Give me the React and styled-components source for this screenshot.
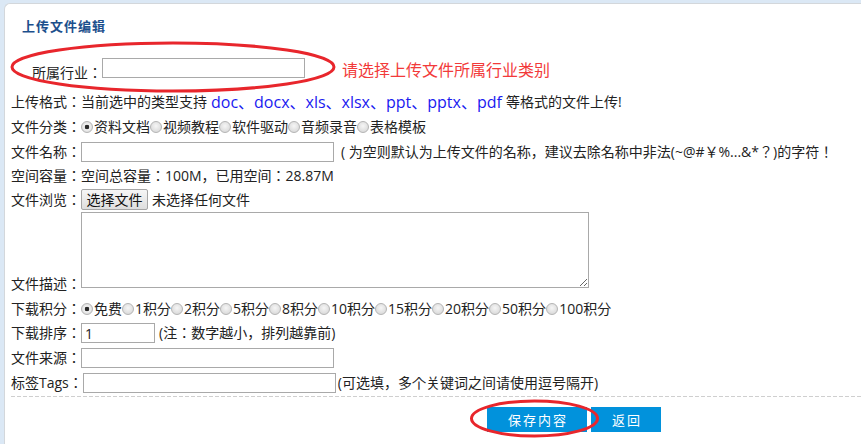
import React from 'react';
import styled, { createGlobalStyle } from 'styled-components';

const FONT = `"Open Sans", "Noto Sans CJK JP", "Noto Sans CJK SC", sans-serif`;

const Global = createGlobalStyle`
  html, body { margin: 0; padding: 0; background: #dbe8f5; }
  body {
    font-family: ${FONT};
    font-size: 14px;
    color: #222;
  }
  #root { height: 444px; overflow: hidden; }
`;

const Page = styled.div`
  position: relative;
  height: 444px;
  padding: 3px 0 0 4px;
  box-sizing: border-box;
`;

const Panel = styled.div`
  background: #fff;
  border-top: 1px solid #d3d7db;
  border-left: 1px solid #d3d7db;
  border-top-left-radius: 6px;
  height: 100%;
  box-sizing: border-box;
  padding-left: 6px;
`;

const Title = styled.h2`
  margin: 14px 0 0 11px;
  font-size: 13px;
  line-height: 17px;
  font-weight: bold;
  letter-spacing: 1px;
  color: #1c4f8c;
`;

const Row = styled.div`
  display: flex;
  align-items: ${p => p.$align || 'center'};
  height: ${p => p.$h || 25}px;
  margin-top: ${p => p.$mt || 0}px;
  padding-left: ${p => p.$indent || 0}px;
  white-space: nowrap;
  line-height: 18px;
`;

const Label = styled.span`
  line-height: ${p => p.$lh || 18}px;
`;

const Text = styled.span`
  color: ${p => p.$color || '#222'};
  font-size: ${p => p.$size || 14}px;
  line-height: 18px;
  margin-left: ${p => p.$ml || 0}px;
  margin-bottom: ${p => p.$mb || 0}px;
`;

const Field = styled.input`
  box-sizing: border-box;
  width: ${p => p.$w}px;
  height: 20px;
  margin: 0 0 ${p => p.$mb || 0}px 0;
  border: 1px solid #a9a9a9;
  padding: 0 3px;
  font: 14px ${FONT};
  color: #222;
  outline: none;
`;

const Radio = styled.input.attrs({ type: 'radio' })`
  appearance: none;
  -webkit-appearance: none;
  margin: 0 1px 0 0;
  width: 12px;
  height: 12px;
  flex: none;
  border-radius: 50%;
  border: 1px solid #b4b4b4;
  box-sizing: border-box;
  background: radial-gradient(circle at 50% 40%, #f6f6f6, #d2d2d2);
  &:checked {
    background: radial-gradient(circle, #2a2a2a 0 2px, #f2f2f2 2.6px, #d0d0d0 100%);
  }
`;

const FileButton = styled.span`
  display: inline-flex;
  align-items: center;
  justify-content: center;
  box-sizing: border-box;
  width: 67px;
  height: 21px;
  border: 1px solid #a6a6a6;
  border-radius: 2px;
  background: linear-gradient(#f6f6f6, #dedede);
  font-size: 14px;
  color: #111;
`;

const Area = styled.textarea`
  box-sizing: border-box;
  width: 508px;
  height: 76px;
  margin: 1px 0 3px 0;
  border: 1px solid #a9a9a9;
  padding: 2px;
  font: 14px ${FONT};
  outline: none;
`;

const Divider = styled.div`
  height: 1px;
  margin-top: 1px;
  background-image: linear-gradient(to right, #cfcfcf 0 4px, transparent 4px 6px);
  background-size: 6px 1px;
`;

const Actions = styled.div`
  display: flex;
  gap: 4px;
  margin: 10px 0 0 476px;
`;

const ActionButton = styled.button`
  width: ${p => p.$w}px;
  height: 25px;
  padding: 0;
  border: 0;
  background: #0192dc;
  color: #fff;
  font: 13px "Noto Sans CJK SC", sans-serif;
  letter-spacing: 2px;
  text-indent: 2px;
`;

const Marks = styled.svg`
  position: absolute;
  top: 0;
  left: 0;
  pointer-events: none;
`;

const RadioGroup = ({ name, items }) => (
  <>
    {items.map((it, i) => (
      <React.Fragment key={it}>
        <Radio name={name} defaultChecked={i === 0} />
        <span>{it}</span>
      </React.Fragment>
    ))}
  </>
);

export default function App() {
  return (
    <>
      <Global />
      <Page>
        <Panel>
          <Title>上传文件编辑</Title>
          <Row $mt={21} $indent={21} $align="flex-end">
            <Label $lh={16}>所属行业：</Label>
            <Field $w={203} $mb={3} />
            <Text $color="#f23a3a" $size={16} $ml={37} $mb={2}>请选择上传文件所属行业类别</Text>
          </Row>
          <Row $mt={8}>
            <Label>上传格式：当前选中的类型支持</Label>
            <Text $color="#1a1af0" $size={16} $ml={4}>doc、docx、xls、xlsx、ppt、pptx、pdf</Text>
            <Text $ml={4}>等格式的文件上传!</Text>
          </Row>
          <Row>
            <Label>文件分类：</Label>
            <RadioGroup name="cat" items={['资料文档', '视频教程', '软件驱动', '音频录音', '表格模板']} />
          </Row>
          <Row>
            <Label>文件名称：</Label>
            <Field $w={253} />
            <Text $ml={7}>( 为空则默认为上传文件的名称，建议去除名称中非法(~@#￥%...&amp;*？)的字符！</Text>
          </Row>
          <Row $h={24}>
            <Label>空间容量：空间总容量：100M，已用空间：28.87M</Label>
          </Row>
          <Row $h={23}>
            <Label>文件浏览：</Label>
            <FileButton>选择文件</FileButton>
            <Text $ml={4}>未选择任何文件</Text>
          </Row>
          <Row $h={80} $align="flex-end">
            <Label $lh={14}>文件描述：</Label>
            <Area />
          </Row>
          <Row $mt={5}>
            <Label>下载积分：</Label>
            <RadioGroup name="score" items={['免费', '1积分', '2积分', '5积分', '8积分', '10积分', '15积分', '20积分', '50积分', '100积分']} />
          </Row>
          <Row $h={24}>
            <Label>下载排序：</Label>
            <Field $w={74} defaultValue="1" />
            <Text $ml={4}>(注：数字越小，排列越靠前)</Text>
          </Row>
          <Row>
            <Label>文件来源：</Label>
            <Field $w={253} />
          </Row>
          <Row>
            <Label>标签Tags：</Label>
            <Field $w={253} />
            <Text $ml={2}>(可选填，多个关键词之间请使用逗号隔开)</Text>
          </Row>
          <Divider />
          <Actions>
            <ActionButton $w={100}>保存内容</ActionButton>
            <ActionButton $w={70}>返回</ActionButton>
          </Actions>
        </Panel>
        <Marks width="861" height="444" viewBox="0 0 861 444">
          <ellipse cx="173" cy="67" rx="161" ry="24" fill="none" stroke="#e8262c" strokeWidth="3" />
          <ellipse cx="534.5" cy="418.5" rx="63" ry="17.5" fill="none" stroke="#e8262c" strokeWidth="3" />
        </Marks>
      </Page>
    </>
  );
}
